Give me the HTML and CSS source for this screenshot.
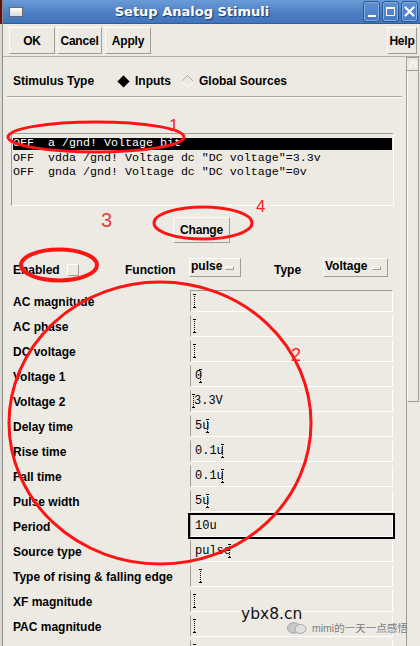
FILE: index.html
```html
<!DOCTYPE html>
<html>
<head>
<meta charset="utf-8">
<link rel="stylesheet" href="styles.css">
</head>
<body>
<div class="screen">
  <div class="edge"></div>
  <div class="window">
    <div class="titlebar">
      <div class="wicon"></div>
      <div class="title">Setup Analog Stimuli</div>
      <div class="tbtn"><span class="i-min"></span></div>
      <div class="tbtn"><span class="i-max"></span></div>
      <div class="tbtn">
        <svg width="11" height="11" viewBox="0 0 11 11"><path d="M1.5 1.5 L9.5 9.5 M9.5 1.5 L1.5 9.5" stroke="#fff" stroke-width="2.2" stroke-linecap="round"/></svg>
      </div>
    </div>
    <div class="toolbar">
      <button class="btn b-ok">OK</button>
      <button class="btn b-cancel">Cancel</button>
      <button class="btn b-apply">Apply</button>
      <span class="spacer"></span>
      <button class="btn b-help">Help</button>
    </div>
    <div class="main">
      <div class="content">
        <div class="stim">
          <span class="lbl stim-lbl">Stimulus Type</span>
          <svg class="dia" width="13" height="13" viewBox="0 0 13 13"><polygon points="6.5,0.5 12.5,6.5 6.5,12.5 0.5,6.5" fill="#000"/><polyline points="0.5,6.5 6.5,0.5 12.5,6.5" fill="none" stroke="#555" stroke-width="1"/></svg>
          <span class="lbl opt1">Inputs</span>
          <svg class="dia" width="13" height="13" viewBox="0 0 13 13"><polyline points="0.5,6.5 6.5,0.5 12.5,6.5" fill="none" stroke="#b0aca5" stroke-width="1"/><polyline points="0.5,6.5 6.5,12.5 12.5,6.5" fill="none" stroke="#fff" stroke-width="1"/></svg>
          <span class="lbl opt2">Global Sources</span>
        </div>
        <div class="sep"></div>
        <div class="list">
          <div class="row sel">OFF  a /gnd! Voltage bit</div>
          <div class="row">OFF  vdda /gnd! Voltage dc "DC voltage"=3.3v</div>
          <div class="row">OFF  gnda /gnd! Voltage dc "DC voltage"=0v</div>
        </div>
        <button class="btn b-change">Change</button>
        <div class="enrow">
          <span class="lbl en-lbl">Enabled</span>
          <span class="check"></span>
          <span class="lbl fn-lbl">Function</span>
          <span class="drop d-pulse">pulse<span class="ind"></span></span>
          <span class="lbl ty-lbl">Type</span>
          <span class="drop d-volt">Voltage<span class="ind"></span></span>
        </div>
        <div class="form">
          <span class="lbl">AC magnitude</span><span class="field first"><span class="cur"></span></span>
          <span class="lbl">AC phase</span><span class="field"><span class="cur"></span></span>
          <span class="lbl">DC voltage</span><span class="field"><span class="cur"></span></span>
          <span class="lbl">Voltage 1</span><span class="field">0<span class="cur ov"></span></span>
          <span class="lbl">Voltage 2</span><span class="field"><span class="cur pre"></span>3.3V</span>
          <span class="lbl">Delay time</span><span class="field">5u<span class="cur ov"></span></span>
          <span class="lbl">Rise time</span><span class="field">0.1u<span class="cur ov"></span></span>
          <span class="lbl">Fall time</span><span class="field">0.1u<span class="cur ov"></span></span>
          <span class="lbl">Pulse width</span><span class="field">5u<span class="cur ov"></span></span>
          <span class="lbl">Period</span><span class="field focus">10u</span>
          <span class="lbl">Source type</span><span class="field">pulse<span class="cur ov"></span></span>
          <span class="lbl">Type of rising &amp; falling edge</span><span class="field"><span class="cur ind6"></span></span>
          <span class="lbl">XF magnitude</span><span class="field"><span class="cur"></span></span>
          <span class="lbl">PAC magnitude</span><span class="field"><span class="cur"></span></span>
          <span class="lbl"></span><span class="field"><span class="cur"></span></span>
        </div>
      </div>
      <div class="sb">
        <div class="sb-up"><svg width="10" height="9" viewBox="0 0 10 9"><polyline points="1,8 5,1 9,8" fill="none" stroke="#fff" stroke-width="1"/></svg></div>
        <div class="sb-thumb"></div>
      </div>
    </div>
  </div>
</div>

<svg class="marks" width="420" height="646" viewBox="0 0 420 646">
  <ellipse cx="96" cy="137" rx="88" ry="15" fill="none" stroke="#ff1414" stroke-width="3"/>
  <ellipse cx="203" cy="223" rx="49" ry="16" fill="none" stroke="#ff1414" stroke-width="3"/>
  <ellipse cx="59" cy="265" rx="38" ry="15.5" fill="none" stroke="#ff1414" stroke-width="4"/>
  <ellipse cx="160" cy="423" rx="151" ry="141" fill="none" stroke="#ff1414" stroke-width="3"/>
  <text x="169" y="131" class="num n1">1</text>
  <text x="256" y="212" class="num n4">4</text>
  <text x="101" y="227" class="num n3">3</text>
  <text x="291" y="361" class="num n2">2</text>
</svg>

<div class="wm">ybx8.cn</div>
<div class="wm2">
  <svg width="20" height="12" viewBox="0 0 20 12"><ellipse cx="7" cy="6" rx="6.5" ry="5.3" fill="#c8c8c8" stroke="#9a9a9a" stroke-width="0.8"/><ellipse cx="13.5" cy="7" rx="5.5" ry="4.5" fill="#e0e0e0" stroke="#9a9a9a" stroke-width="0.8"/></svg>
  <span>mimi的一天一点感悟</span>
</div>
</body>
</html>
```

FILE: styles.css
```css
* { box-sizing: border-box; }
html, body { margin: 0; padding: 0; }
body {
  width: 420px;
  height: 646px;
  overflow: hidden;
  background: #edeae4;
  font-family: "Liberation Sans", Arial, sans-serif;
  position: relative;
}
.screen { display: flex; height: 646px; }
.edge {
  width: 3px;
  background: linear-gradient(#5c1212 0 24px, #dcd9d3 24px);
  border-right: 1px solid #8c8a86;
}
.window { flex: 1; display: flex; flex-direction: column; min-width: 0; }

.titlebar {
  height: 24px;
  display: flex;
  align-items: center;
  background: linear-gradient(#6b9bd8, #4d80c4 55%, #4174ba);
  border-bottom: 1px solid #2f5c9a;
  padding-right: 2px;
}
.wicon {
  width: 14px; height: 10px;
  margin-left: 6px;
  background: linear-gradient(#ffffff, #dcdcdc);
  border: 1px solid #6a6a6a;
}
.title {
  flex: 1;
  text-align: center;
  color: #fff;
  font-family: "DejaVu Sans", sans-serif;
  font-weight: bold;
  font-size: 13px;
  text-shadow: 1px 1px 1px #1d3a66;
}
.tbtn {
  width: 17px; height: 21px;
  margin-left: 2px;
  border: 1px solid #2a558f;
  border-radius: 3px;
  background: linear-gradient(#5f92d3, #4479c0);
  box-shadow: inset 0 0 0 1px #86aee0;
  display: flex; align-items: center; justify-content: center;
  position: relative;
}
.i-min { width: 8px; height: 2px; background: #fff; margin-top: 8px; }
.i-max { width: 9px; height: 9px; border: 1px solid #fff; border-top-width: 2px; }

.toolbar {
  height: 33px;
  display: flex;
  padding: 3px 3px 0 6px;
  gap: 2px;
  border-bottom: 1px solid #b3afa8;
}
.spacer { flex: 1; }
.btn {
  height: 27px;
  font-family: "Liberation Sans", Arial, sans-serif;
  font-weight: bold;
  font-size: 12px;
  color: #000;
  background: #edeae4;
  border: 1px solid;
  border-color: #fdfdfc #a19d96 #a19d96 #fdfdfc;
  padding: 0;
  letter-spacing: -0.2px;
}
.b-ok { width: 46px; }
.b-cancel { width: 45px; }
.b-apply { width: 46px; margin-left: 1px; }
.b-help { width: 30px; }

.main { flex: 1; display: flex; min-height: 0; overflow: hidden; }
.content { width: 403px; overflow: hidden; }

.lbl { font-weight: bold; font-size: 12px; color: #000; white-space: nowrap; }

.stim {
  display: flex; align-items: center;
  height: 20px;
  margin: 14px 0 0 10px;
}
.stim-lbl { width: 104px; }
.dia { flex: none; }
.opt1 { margin-left: 5px; width: 46px; }
.opt2 { margin-left: 5px; }

.sep {
  border-top: 1px solid #aaa69f;
  border-bottom: 1px solid #fff;
  margin: 5px 4px 0 4px;
}

.list {
  margin: 35px 12px 0 8px;
  height: 73px;
  border: 1px solid;
  border-color: #a19d96 #fff #fff #a19d96;
  padding: 2px 1px 0 1px;
}
.row {
  height: 14.6px;
  line-height: 14.6px;
  font-family: "Liberation Mono", "Courier New", monospace;
  font-size: 11.67px;
  white-space: pre;
  color: #000;
}
.row.sel {
  background: linear-gradient(transparent 2px, #000 2px, #000 14px, transparent 14px);
  color: #fff;
}

.b-change {
  display: block;
  width: 57px; height: 26px;
  margin: 11px 0 0 170px;
}

.enrow {
  display: flex;
  align-items: center;
  height: 20px;
  margin: 14px 0 0 10px;
}
.enrow .lbl { padding-top: 6px; }
.en-lbl { width: 54px; }
.check {
  width: 12px; height: 12px;
  border: 1px solid;
  border-color: #fff #a19d96 #a19d96 #fff;
  margin-top: 6px;
}
.fn-lbl { margin-left: 46px; width: 64px; }
.ty-lbl { margin-left: 33px; width: 49px; }
.drop {
  display: flex; align-items: center;
  height: 19px;
  font-weight: bold; font-size: 12px;
  border: 1px solid;
  border-color: #fff #a19d96 #a19d96 #fff;
  padding: 0 0 2px 1px;
}
.d-pulse { width: 52px; }
.d-volt { width: 65px; padding-left: 1px; }
.ind {
  width: 9px; height: 4px;
  margin-left: auto; margin-right: 6px; margin-top: 3px;
  border: 1px solid;
  border-color: #fff #a19d96 #a19d96 #fff;
}

.form {
  display: grid;
  grid-template-columns: 177px 203px;
  grid-auto-rows: 22px;
  row-gap: 3px;
  align-items: center;
  margin: 13px 0 0 10px;
}
.form .lbl { padding-top: 1px; }
.field {
  height: 22px;
  display: flex;
  align-items: center;
  padding-left: 4px;
  border-left: 1px solid #a19d96;
  border-right: 1px solid #fff;
  border-bottom: 1px solid #fff;
  border-top: 1px solid #edeae4;
  font-family: "Liberation Mono", "Courier New", monospace;
  font-size: 12px;
  color: #000;
}
.field.first { border-top-color: #a19d96; }
.field.focus { outline: 2px solid #000; outline-offset: 0; }

.cur {
  display: inline-block;
  position: relative;
  width: 3px; height: 14px;
  margin-left: -2px;
  background: repeating-linear-gradient(to bottom, #000 0 1px, transparent 1px 2px) center / 1px 100% no-repeat;
}
.cur::before, .cur::after {
  content: "";
  position: absolute;
  left: 0; width: 3px; height: 1px;
  background: #000;
}
.cur::before { top: 0; }
.cur::after { bottom: 0; }
.cur.ov { margin-left: -3px; }
.cur.pre { margin-left: -3px; margin-right: -1px; }
.cur.ind6 { margin-left: 4px; }

.sb {
  width: 13px;
  border-left: 1px solid #a19d96;
  display: flex; flex-direction: column;
  margin-right: 1px;
}
.sb-up {
  height: 14px;
  display: flex; align-items: center; justify-content: center;
  border-top: 1px solid #a19d96;
  border-right: 1px solid #a19d96;
  border-bottom: 1px solid #a19d96;
}
.sb-thumb {
  height: 331px;
  border-left: 1px solid #fff;
  border-right: 1px solid #a19d96;
  border-bottom: 1px solid #a19d96;
}

.marks { position: absolute; left: 0; top: 0; pointer-events: none; }
.num { font-family: "Liberation Sans", Arial, sans-serif; fill: #ff2222; }
.n1 { font-size: 17px; }
.n4 { font-size: 17px; }
.n3 { font-size: 20px; fill: #e8403c; }
.n2 { font-size: 18px; }

.wm {
  position: absolute;
  left: 241px; top: 605px;
  font-family: "DejaVu Sans", sans-serif;
  font-size: 15.5px;
  color: #111;
}
.wm2 {
  position: absolute;
  left: 287px; top: 620px;
  display: flex; align-items: center; gap: 5px;
  font-family: "Liberation Sans", "Noto Sans CJK SC", sans-serif;
  font-size: 10.5px;
  color: #7c7c7c;
}
```
